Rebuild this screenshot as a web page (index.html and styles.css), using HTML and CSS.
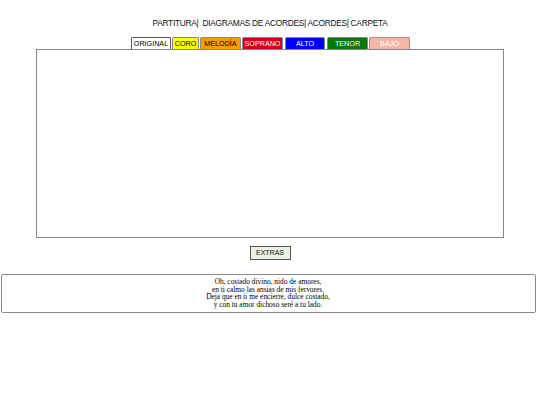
FILE: index.html
```html
<!DOCTYPE html>
<html>
<head>
<meta charset="utf-8">
<link rel="stylesheet" href="styles.css">
</head>
<body>
<div class="page">
  <div class="menu">PARTITURA|&nbsp; DIAGRAMAS DE ACORDES| ACORDES| CARPETA</div>
  <div class="tabs">
    <div class="tab t-original">ORIGINAL</div>
    <div class="tab t-coro">CORO</div>
    <div class="tab t-melodia">MELODÍA</div>
    <div class="tab t-soprano">SOPRANO</div>
    <div class="tab t-alto">ALTO</div>
    <div class="tab t-tenor">TENOR</div>
    <div class="tab t-bajo">BAJO</div>
  </div>
  <div class="score"></div>
  <div class="extras-row"><div class="extras">EXTRAS</div></div>
  <div class="lyrics">
    Oh, costado divino, nido de amores,<br>
    en ti calmo las ansias de mis fervores.<br>
    Deja que en ti me encierre, dulce costado,<br>
    y con tu amor dichoso seré a tu lado.
  </div>
</div>
</body>
</html>
```

FILE: styles.css
```css
html, body {
  margin: 0;
  padding: 0;
  background: #fff;
}
.page {
  width: 540px;
  display: flex;
  flex-direction: column;
  align-items: center;
  font-family: "Liberation Sans", Arial, sans-serif;
}
.menu {
  margin-top: 18px;
  font-size: 8.4px;
  line-height: 10px;
  color: #111;
  white-space: nowrap;
  letter-spacing: -0.3px;
}
.tabs {
  margin-top: 9px;
  display: flex;
  gap: 1px;
  margin-left: 1px;
}
.tab {
  height: 11px;
  line-height: 11px;
  font-size: 7.2px;
  text-align: center;
  border: 1px solid #666;
  border-bottom: none;
  border-radius: 2px 2px 0 0;
  box-sizing: content-box;
}
.t-original { width: 38px; background: #fff; color: #000; border-color: #555; }
.t-coro { width: 25px; background: #ffff00; color: #000; border-color: #888; }
.t-melodia { width: 39px; background: #ff9900; color: #000; border-color: #888; }
.t-soprano { width: 39px; background: #d0001c; color: #fff; border-color: #888; }
.t-alto { width: 38px; background: #0000ff; color: #fff; border-color: #888; margin-left: 1px; }
.t-tenor { width: 39px; background: #007a00; color: #fff; border-color: #888; margin-left: 1px; }
.t-bajo { width: 39px; background: #f7b5a8; color: #fff; border-color: #b08880; }
.score {
  width: 466px;
  height: 187px;
  border: 1px solid #888;
  margin-left: -1px;
}
.extras-row {
  margin-top: 8px;
  display: flex;
  justify-content: center;
}
.extras {
  width: 39px;
  height: 12px;
  line-height: 12px;
  font-size: 7px;
  text-align: center;
  background: #eaf2e2;
  border: 1px solid #555;
  color: #111;
}
.lyrics {
  margin-top: 14px;
  width: 533px;
  margin-left: -4px;
  padding: 3px 0 3px;
  border: 1px solid #888;
  border-radius: 2px;
  font-family: "Liberation Serif", "Times New Roman", serif;
  font-size: 7.4px;
  line-height: 7.7px;
  text-align: center;
  color: #000;
}
```
